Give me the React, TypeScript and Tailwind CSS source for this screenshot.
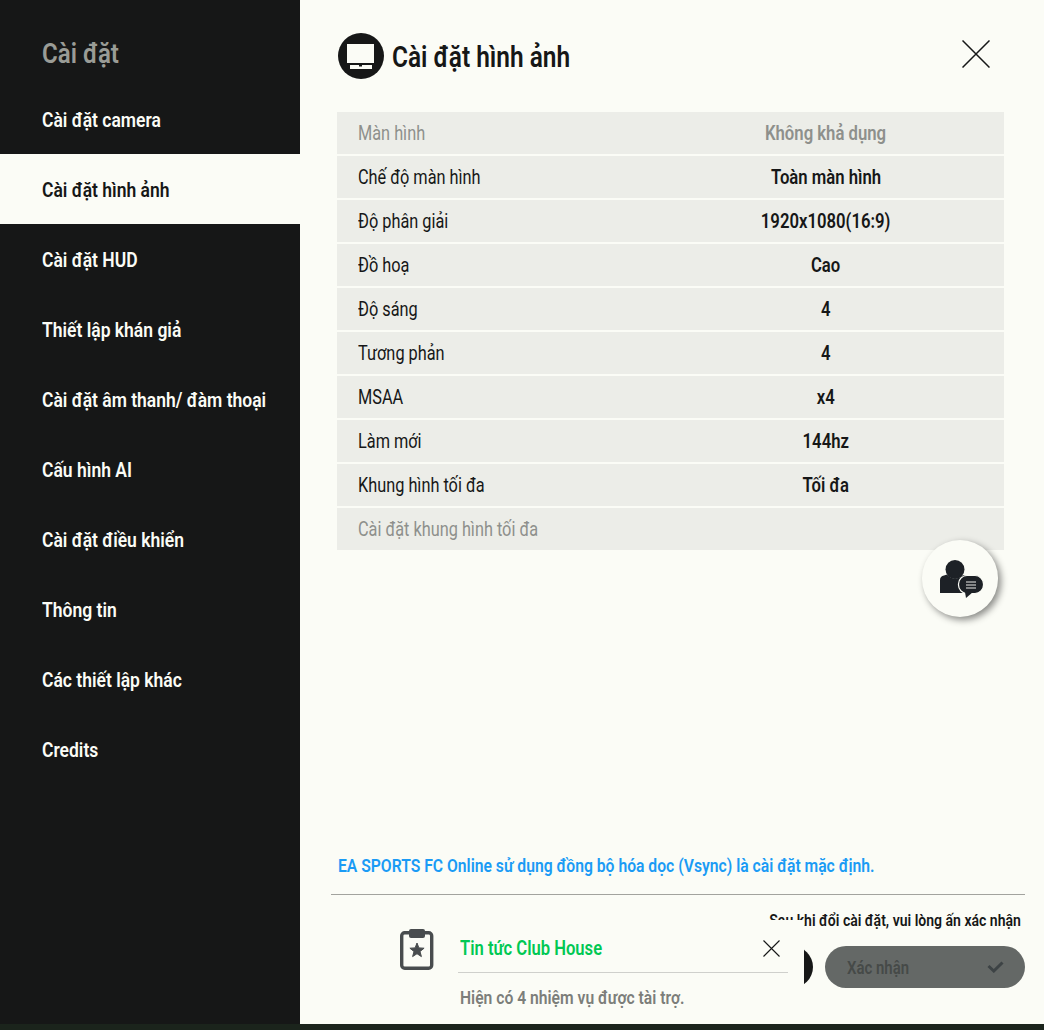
const font = "font-['Roboto',sans-serif]"

const menu = [
  'Cài đặt camera',
  'Cài đặt hình ảnh',
  'Cài đặt HUD',
  'Thiết lập khán giả',
  'Cài đặt âm thanh/ đàm thoại',
  'Cấu hình AI',
  'Cài đặt điều khiển',
  'Thông tin',
  'Các thiết lập khác',
  'Credits',
]

const rows = [
  { label: 'Màn hình', value: 'Không khả dụng', muted: true },
  { label: 'Chế độ màn hình', value: 'Toàn màn hình' },
  { label: 'Độ phân giải', value: '1920x1080(16:9)' },
  { label: 'Đồ hoạ', value: 'Cao' },
  { label: 'Độ sáng', value: '4' },
  { label: 'Tương phản', value: '4' },
  { label: 'MSAA', value: 'x4' },
  { label: 'Làm mới', value: '144hz' },
  { label: 'Khung hình tối đa', value: 'Tối đa' },
  { label: 'Cài đặt khung hình tối đa', value: '', muted: true },
]

function MonitorBadge() {
  return (
    <svg width="46" height="46" viewBox="0 0 46 46" className="shrink-0">
      <circle cx="23" cy="23" r="23" fill="#161717" />
      <rect x="9" y="11" width="27" height="19" fill="#fbfcf6" />
      <rect x="12" y="32" width="22" height="4" fill="#fbfcf6" />
      <rect x="21" y="32" width="3" height="1.500" fill="#161717" />
    </svg>
  )
}

function CloseIcon({ size, width }: { size: number; width: number }) {
  return (
    <svg width={size} height={size} viewBox={`0 0 ${size} ${size}`} className="block">
      <path d={`M0.500 0.500L${size - 0.5} ${size - 0.5}M${size - 0.5} 0.500L0.500 ${size - 0.5}`} stroke="#161717" strokeWidth={width} />
    </svg>
  )
}

function AdvisorIcon() {
  return (
    <svg width="44" height="38" viewBox="0 0 44 38">
      <circle cx="15" cy="9.500" r="9.500" fill="#1d2126" />
      <path d="M0 33V20c0-2.500 1.500-4 4-4.500l3-1c2 2.500 5 4 8 4s6-1.500 8-3.500l5 2v16z" fill="#1d2126" />
      <rect x="18.500" y="15.500" width="25" height="18" rx="8.500" fill="#1d2126" stroke="#fbfcf6" strokeWidth="1.200" />
      <path d="M25 32h8l-7 6z" fill="#1d2126" />
      <path d="M26 22h10M26 25h10M26 28h10" stroke="#a6a8a8" strokeWidth="1.300" />
    </svg>
  )
}

function ClipboardStar() {
  return (
    <svg width="34" height="41" viewBox="0 0 34 41" className="block">
      <rect x="1.700" y="3.700" width="30" height="35.500" rx="3" fill="none" stroke="#484c4e" strokeWidth="3.400" />
      <rect x="9" y="0" width="16" height="9" rx="2" fill="#484c4e" />
      <polygon
        points="17,14 18.900,18.900 24.100,19.200 20,22.500 21.400,27.600 17,24.700 12.600,27.600 14,22.500 9.900,19.200 15.100,18.900"
        fill="#484c4e"
        stroke="#484c4e"
        strokeLinejoin="round"
      />
    </svg>
  )
}

export default function App() {
  return (
    <div className={`${font} w-[1044px] h-[1030px] overflow-hidden bg-[#1b241c] relative`}>
      <div className="flex h-[1024px]">
        <aside className="w-[300px] shrink-0 bg-[#161717] flex flex-col">
          <h1 className="h-[84px] pl-[42px] pt-[36px] text-[28px] leading-[36px] font-semibold text-[#9a9c96]">
            <span className="inline-block origin-left scale-x-[0.86]">Cài đặt</span>
          </h1>
          {menu.map((item, i) => (
            <div
              key={item}
              className={`h-[70px] pl-[42px] pt-[2px] flex items-center text-[20px] font-semibold ${
                i === 1 ? 'bg-[#fbfcf6] text-[#161717]' : 'text-[#fbfcf6]'
              }`}
            >
              <span className="inline-block origin-left whitespace-nowrap scale-x-[0.875]">{item}</span>
            </div>
          ))}
        </aside>

        <main className="flex-1 bg-[#fbfcf6] flex flex-col pt-[33px] pl-[31px] pr-[19px]">
          <header className="flex items-center ml-[7px] h-[46px]">
            <MonitorBadge />
            <h2 className="ml-2 pt-[4px] text-[29px] font-semibold text-[#161717] whitespace-nowrap">
              <span className="inline-block origin-left scale-x-[0.843]">Cài đặt hình ảnh</span>
            </h2>
            <div className="ml-auto mr-[35px] -mt-[5px]">
              <CloseIcon size={28} width={1.500} />
            </div>
          </header>

          <div className="ml-[6px] mt-[33px] w-[667px] flex flex-col gap-[2px]">
            {rows.map((row) => (
              <div key={row.label} className="h-[42px] bg-[#ecede8] flex items-center text-[20px]">
                <div className={`w-[311px] pl-[21px] ${row.muted ? 'text-[#8e908c]' : 'text-[#161717]'}`}>
                  <span className="inline-block origin-left whitespace-nowrap scale-x-[0.815]">{row.label}</span>
                </div>
                <div className={`w-[356px] text-center font-semibold ${row.muted ? 'text-[#8e908c]' : 'text-[#161717]'}`}>
                  <span className="inline-block whitespace-nowrap scale-x-[0.835]">{row.value}</span>
                </div>
              </div>
            ))}
          </div>

          <div className="flex-1" />

          <p className="ml-[7px] h-[28px] leading-[28px] text-[19px] font-semibold text-[#1a9bf5] whitespace-nowrap">
            <span className="inline-block origin-left scale-x-[0.826]">
              EA SPORTS FC Online sử dụng đồng bộ hóa dọc (Vsync) là cài đặt mặc định.
            </span>
          </p>
          <div className="mt-[14px] h-px bg-[#a2a39e]" />

          <div className="h-[129px] pt-[16px] flex flex-col items-end">
            <p className="pr-1 h-[20px] leading-[20px] text-[16px] font-semibold text-[#161717] whitespace-nowrap">
              <span className="inline-block origin-right scale-x-[0.877]">Sau khi đổi cài đặt, vui lòng ấn xác nhận</span>
            </p>
            <div className="mt-[15px] flex gap-3">
              <div className="w-[200px] h-[42px] rounded-full bg-[#161717]" />
              <div className="w-[200px] h-[42px] rounded-full bg-[#646866] flex items-center justify-between pl-[22px] pr-[21px] text-[18px] font-semibold text-[#464a48]">
                <span className="inline-block origin-left scale-x-[0.83]">Xác nhận</span>
                <svg width="17" height="12" viewBox="0 0 17 12">
                  <path d="M1.500 5L6.800 10L15.500 1.500" fill="none" stroke="#3d4345" strokeWidth="3" />
                </svg>
              </div>
            </div>
          </div>
        </main>
      </div>

      <button className="absolute left-[922px] top-[540px] w-[76px] h-[77px] rounded-full bg-[#fbfcf6] shadow-[3px_3px_7px_rgba(0,0,0,0.45)] flex items-center justify-center pl-[3px] pt-px">
        <AdvisorIcon />
      </button>

      <div className="absolute left-[360px] top-[920px] w-[444px] h-[104px] bg-[#fbfcf6]">
        <div className="absolute left-[40px] top-[9px]">
          <ClipboardStar />
        </div>
        <div className="absolute left-[98px] top-0 w-[330px] h-[53px] border-b border-[#cfd0cc] flex items-center pt-[5px] text-[21px] font-semibold text-[#00c853]">
          <span className="ml-[2px] inline-block origin-left whitespace-nowrap scale-x-[0.79]">Tin tức Club House</span>
        </div>
        <div className="absolute left-[403px] top-[20px]">
          <CloseIcon size={17} width={1.100} />
        </div>
        <p className="absolute left-[100px] top-[64px] text-[19px] font-semibold text-[#7c7e7a] whitespace-nowrap">
          <span className="inline-block origin-left scale-x-[0.825]">Hiện có 4 nhiệm vụ được tài trợ.</span>
        </p>
      </div>
    </div>
  )
}
